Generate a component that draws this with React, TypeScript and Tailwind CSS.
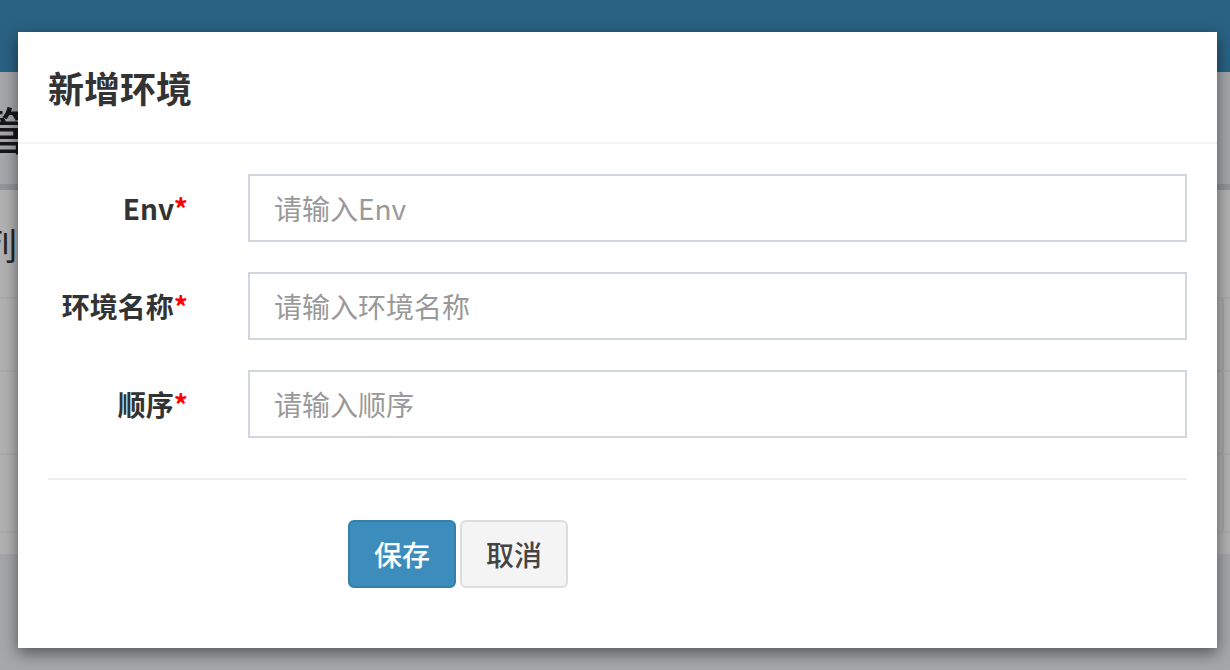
const font = "font-['Noto_Sans_CJK_SC','Noto_Sans',sans-serif]";

function Field({ label, placeholder }: { label: string; placeholder: string }) {
  return (
    <div className="flex items-center">
      <label className="w-[170px] shrink-0 pr-[30px] text-right text-[28px] font-bold leading-none text-[#333]">
        {label}
        <span className="text-[#ff0000]">*</span>
      </label>
      <input
        type="text"
        placeholder={placeholder}
        className="ml-[30px] h-[68px] w-[940px] border-2 border-[#d2d6de] bg-white px-[24px] text-[28px] text-[#555] outline-none placeholder:text-[#999]"
      />
    </div>
  );
}

export default function App() {
  return (
    <div className={`relative h-[670px] w-[1230px] overflow-hidden bg-[#ecf0f5] ${font}`}>
      {/* page behind the dialog */}
      <div className="h-[72px] bg-[#3c8dbc]" />
      <div className="flex h-[112px] items-center">
        <h1 className="ml-[-22px] text-[50px] font-medium text-[#222]">管理</h1>
      </div>
      <div className="h-[370px] border-t-[6px] border-[#d2d6de] bg-white">
        <div className="flex h-[107px] items-center">
          <h3 className="ml-[-19px] text-[36px] text-[#333]">列表</h3>
        </div>
        <div className="flex h-[73px] border-t-2 border-[#f4f4f4]">
          <div className="flex-1" />
          <div className="w-[8px] border-l-2 border-[#eee]" />
        </div>
        <div className="flex h-[83px] border-t-2 border-[#f4f4f4]">
          <div className="flex-1" />
          <div className="w-[8px] border-l-2 border-[#eee]" />
        </div>
        <div className="flex h-[80px] border-y-2 border-[#f4f4f4]">
          <div className="flex-1" />
          <div className="w-[8px] border-l-2 border-[#eee]" />
        </div>
      </div>

      {/* backdrop */}
      <div className="absolute inset-0 bg-black/30" />

      {/* dialog */}
      <div className="absolute left-[18px] top-[32px] w-[1199px] bg-white shadow-[0_5px_15px_rgba(0,0,0,0.5)]">
        <div className="flex h-[112px] items-center border-b-2 border-[#f4f4f4] px-[30px]">
          <h4 className="text-[36px] font-semibold leading-none text-[#333]">新增环境</h4>
        </div>
        <div className="px-[30px] pt-[30px] pb-[60px]">
          <div className="flex flex-col gap-[30px]">
            <Field label="Env" placeholder="请输入Env" />
            <Field label="环境名称" placeholder="请输入环境名称" />
            <Field label="顺序" placeholder="请输入顺序" />
          </div>
          <div className="mt-[40px] border-t-2 border-[#eee]" />
          <div className="mt-[40px] flex gap-[4px] pl-[300px]">
            <button className="h-[68px] w-[108px] rounded-[6px] border-2 border-[#367fa9] bg-[#3c8dbc] text-[28px] font-medium text-white">
              保存
            </button>
            <button className="h-[68px] w-[108px] rounded-[6px] border-2 border-[#ddd] bg-[#f4f4f4] text-[28px] font-medium text-[#444]">
              取消
            </button>
          </div>
        </div>
      </div>
    </div>
  );
}
